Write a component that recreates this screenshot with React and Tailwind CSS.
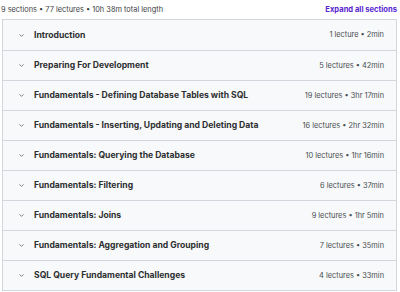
import React from "react";

const sections = [
  { title: "Introduction", meta: "1 lecture • 2min" },
  { title: "Preparing For Development", meta: "5 lectures • 42min" },
  { title: "Fundamentals - Defining Database Tables with SQL", meta: "19 lectures • 3hr 17min" },
  { title: "Fundamentals - Inserting, Updating and Deleting Data", meta: "16 lectures • 2hr 32min" },
  { title: "Fundamentals: Querying the Database", meta: "10 lectures • 1hr 16min" },
  { title: "Fundamentals: Filtering", meta: "6 lectures • 37min" },
  { title: "Fundamentals: Joins", meta: "9 lectures • 1hr 5min" },
  { title: "Fundamentals: Aggregation and Grouping", meta: "7 lectures • 35min" },
  { title: "SQL Query Fundamental Challenges", meta: "4 lectures • 33min" },
];

const Chevron = () => (
  <svg width="7" height="7" viewBox="0 0 24 24" fill="none" stroke="#6a6f73" strokeWidth="3" strokeLinecap="round" strokeLinejoin="round">
    <path d="M6 9l6 6 6-6" />
  </svg>
);

const App = () => {
  return (
    <div className="w-[400px] h-[292px] bg-white overflow-hidden font-['Inter',sans-serif] text-[#2d2f31]">
      <div className="flex items-center justify-between h-[19px] pl-[1px] pr-[3px]">
        <span className="text-[7.4px] text-[#3e4143]">9 sections • 77 lectures • 10h 38m total length</span>
        <span className="text-[7.6px] font-bold text-[#5624d0]">Expand all sections</span>
      </div>
      <div className="ml-[2px] mr-[3px] border border-[#d1d7dc]">
        {sections.map((s, i) => (
          <div
            key={i}
            className={`flex items-center h-[30px] bg-[#f7f9fa] pl-[15px] pr-[12px] ${i > 0 ? "border-t border-[#d1d7dc]" : ""}`}
          >
            <Chevron />
            <span className="ml-[9px] flex-1 text-[8.6px] font-bold text-[#2d2f31]">{s.title}</span>
            <span className="text-[7.4px] text-[#4a4e51]">{s.meta}</span>
          </div>
        ))}
      </div>
    </div>
  );
};

export default App;
